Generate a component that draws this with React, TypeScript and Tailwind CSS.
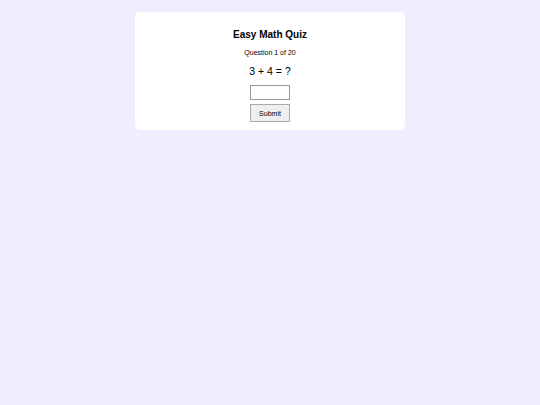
export default function App() {
  return (
    <div className="min-h-[405px] w-full bg-[#eeeeff] pt-[12px]" style={{ fontFamily: '"Liberation Sans", Arial, sans-serif' }}>
      <div className="mx-auto flex w-[270px] flex-col items-center rounded-[5px] bg-white pb-[8px] pt-[16px] text-center text-black">
        <h1 className="text-[10px] font-bold leading-[14px] text-black">Easy Math Quiz</h1>
        <p className="mt-[6px] text-[7px] leading-[10px] text-black">Question 1 of 20</p>
        <p className="mt-[6px] text-[10.5px] leading-[14px] text-black">3 + 4 = ?</p>
        <input
          type="text"
          className="mt-[7px] box-border h-[15px] w-[40px] border border-[#999] bg-white outline-none"
        />
        <button className="mt-[4px] box-border h-[18px] w-[40px] border border-[#aaa] bg-[#efefef] text-[7px] leading-none text-black">
          Submit
        </button>
      </div>
    </div>
  );
}
